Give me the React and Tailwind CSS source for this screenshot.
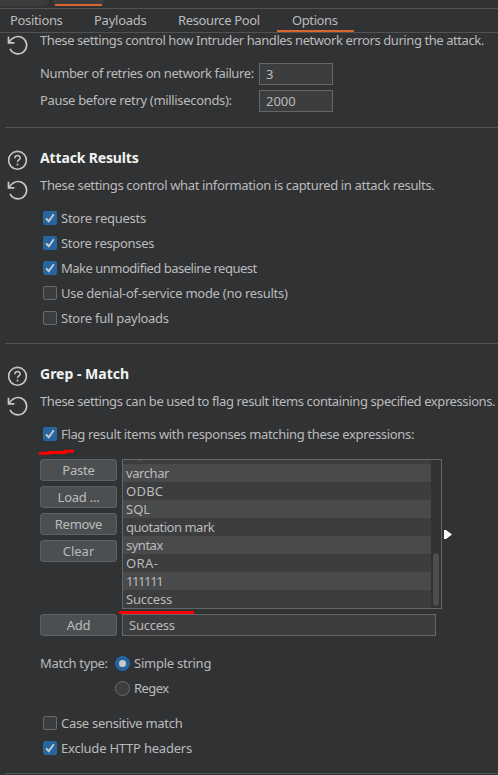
import React from "react";

const HelpIcon = () => (
  <svg className="block h-5 w-[22px] shrink-0" viewBox="0 0 22 20" fill="none" stroke="#c5c7c8">
    <circle cx="10.5" cy="10.3" r="8.9" strokeWidth="1.6" />
    <path d="M7.8 8.2C7.8 4.7 13.2 4.7 13.2 8C13.2 9.9 10.5 9.9 10.5 12" strokeWidth="1.5" />
    <path d="M10.5 13.6V15.4" strokeWidth="1.7" />
  </svg>
);

const ResetIcon = () => (
  <svg className="block h-5 w-[22px] shrink-0" viewBox="0 0 22 20" fill="none" stroke="#c5c7c8" strokeWidth="1.7">
    <path d="M1.5 1.8V7.8H7.4" />
    <path d="M1.8 7.4C4 4.4 7.2 1.5 11 1.5A8.7 8.7 0 1 1 3 13.8" />
  </svg>
);

const Checkbox = ({ on, children, track }) => (
  <div className="flex h-[25px] items-center">
    <span
      className={
        "mr-1 flex size-[14px] shrink-0 items-center justify-center rounded-[2px] " +
        (on ? "bg-[#2765a0]" : "border border-[#6b6b6b] bg-[#3c3d3e]")
      }
    >
      {on && (
        <svg className="block size-[14px]" viewBox="0 0 14 14" fill="none" stroke="#c9cbcd" strokeWidth="1.9">
          <path d="M3 7.3L5.8 10.2L10.8 3.2" />
        </svg>
      )}
    </span>
    <span className={"whitespace-nowrap leading-4 " + track}>{children}</span>
  </div>
);

const Radio = ({ on, children, track }) => (
  <div className="flex h-[25px] items-center">
    <span
      className={
        "mr-1 flex size-[15px] shrink-0 items-center justify-center rounded-full " +
        (on ? "bg-[#2765a0]" : "border border-[#6b6b6b] bg-[#3c3d3e]")
      }
    >
      {on && <span className="size-[7px] rounded-full bg-[#c9cbcd]" />}
    </span>
    <span className={"whitespace-nowrap pb-px leading-4 " + track}>{children}</span>
  </div>
);

const Button = ({ children, track = "" }) => (
  <button
    className={
      "block h-[22px] w-[77px] rounded-[3px] border border-[#5e6163] bg-[#4b4f51] text-center leading-5 " + track
    }
  >
    {children}
  </button>
);

const Field = ({ children, className }) => (
  <div className={"h-[22px] border border-[#646668] bg-[#3c3d3e] px-1.5 leading-5 " + className}>{children}</div>
);

const Rule = () => <div className="ml-[5px] h-px shrink-0 bg-[#515254]" />;

const words = [
  ["varchar", "tracking-[-0.43px]"],
  ["ODBC", "tracking-[0.25px]"],
  ["SQL", ""],
  ["quotation mark", "tracking-[-0.48px]"],
  ["syntax", "tracking-[-0.5px]"],
  ["ORA-", "tracking-[0.4px]"],
  ["111111", "tracking-[-1.4px]"],
  ["Success", "tracking-[-0.2px]"],
];

export default function App() {
  return (
    <div className="flex h-[775px] w-[498px] flex-col overflow-hidden bg-[#313234] font-['Noto_Sans',sans-serif] text-[13px] text-[#bbbbbb]">
      <div className="flex h-2 shrink-0">
        <div className="h-1.5 w-[49px] rounded-br-md bg-[#3c3c3c]" />
        <div className="ml-1 h-1.5 w-[51px] rounded-b-md bg-[#3c3c3c] px-0.5 pt-1">
          <div className="h-0.5 bg-[#d9652f]" />
        </div>
      </div>
      <div className="flex h-[25px] shrink-0 border-y border-[#515254] leading-[23px]">
        <div className="w-[83px] pl-[10px] tracking-[-0.33px]">Positions</div>
        <div className="w-[84px] pl-[11px] tracking-[-0.25px]">Payloads</div>
        <div className="w-[110px] whitespace-nowrap pl-[11px] tracking-[-0.38px]">Resource Pool</div>
        <div className="w-[77px] border-b-2 border-[#d9652f] pl-[15px] tracking-[-0.4px]">Options</div>
      </div>

      <div className="flex h-[94px] shrink-0 pl-[7px]">
        <div className="w-[33px] shrink-0 pt-[2px]">
          <ResetIcon />
        </div>
        <div>
          <p className="-mt-px whitespace-nowrap leading-4 tracking-[-0.42px]">
            These settings control how Intruder handles network errors during the attack.
          </p>
          <div className="mt-[15px] flex items-center">
            <span className="w-[219px] whitespace-nowrap tracking-[-0.39px]">Number of retries on network failure:</span>
            <Field className="w-[74px]">3</Field>
          </div>
          <div className="mt-[5px] flex items-center">
            <span className="w-[219px] whitespace-nowrap tracking-[-0.33px]">Pause before retry (milliseconds):</span>
            <Field className="w-[74px]">2000</Field>
          </div>
        </div>
      </div>
      <Rule />

      <div className="flex h-[215px] shrink-0 pl-[7px]">
        <div className="w-[33px] shrink-0 pt-[22px]">
          <HelpIcon />
          <div className="h-[10px]" />
          <ResetIcon />
        </div>
        <div className="pt-[22px]">
          <h2 className="text-sm font-bold leading-4 tracking-[-0.15px] text-[#f2f2f2]">Attack Results</h2>
          <p className="mt-[11px] whitespace-nowrap leading-4 tracking-[-0.34px]">
            These settings control what information is captured in attack results.
          </p>
          <div className="ml-[3px] mt-[12px]">
            <Checkbox on track="tracking-[-0.25px]">Store requests</Checkbox>
            <Checkbox on track="tracking-[-0.32px]">Store responses</Checkbox>
            <Checkbox on track="tracking-[-0.5px]">Make unmodified baseline request</Checkbox>
            <Checkbox track="tracking-[-0.27px]">Use denial-of-service mode (no results)</Checkbox>
            <Checkbox track="tracking-[-0.26px]">Store full payloads</Checkbox>
          </div>
        </div>
      </div>
      <Rule />

      <div className="flex h-[429px] shrink-0 pl-[7px]">
        <div className="w-[33px] shrink-0 pt-[22px]">
          <HelpIcon />
          <div className="h-[10px]" />
          <ResetIcon />
        </div>
        <div className="pt-[22px]">
          <h2 className="text-sm font-bold leading-4 text-[#f2f2f2]">Grep - Match</h2>
          <p className="mt-[11px] whitespace-nowrap leading-4 tracking-[-0.4px]">
            These settings can be used to flag result items containing specified expressions.
          </p>
          <div className="relative ml-[3px] mt-[12px]">
            <Checkbox on track="tracking-[-0.34px]">
              Flag result items with responses matching these expressions:
            </Checkbox>
            <svg className="absolute -left-1 top-[27px] h-2 w-9" viewBox="0 0 36 8" fill="none" stroke="#ff0000" strokeWidth="3">
              <path d="M0 5.3H10V4.6H26V3.3H35" />
            </svg>
          </div>
          <div className="mt-[13px] flex gap-[5px]">
            <div className="flex flex-col gap-[5px]">
              <Button track="tracking-[-0.2px]">Paste</Button>
              <Button track="tracking-[-0.25px]">Load ...</Button>
              <Button track="tracking-[-0.3px]">Remove</Button>
              <Button>Clear</Button>
            </div>
            <div className="relative flex h-[150px] w-[320px] border border-[#646668]">
              <div className="w-[308px]">
                <div className="flex h-1 items-start bg-[#3c3d3e] pl-[17px]">
                  <span className="h-px w-px bg-[#85878a]" />
                </div>
                {words.map(([word, track], i) => (
                  <div
                    key={word}
                    className={
                      "h-[18px] pl-[3px] leading-[18px] " + (i % 2 ? "bg-[#3c3d3e] " : "bg-[#494a4c] ") + track
                    }
                  >
                    {word}
                  </div>
                ))}
              </div>
              <div className="flex flex-1 flex-col justify-end bg-[#313234] pb-[2px] pl-[2px]">
                <div className="h-[53px] w-1.5 rounded-full bg-[#4d4e50]" />
              </div>
              <div className="absolute -left-1 top-[151px] h-[3px] w-[75px] bg-[#ff0000]" />
            </div>
            <svg className="-ml-[3px] mt-[71px] block h-[9px] w-2" viewBox="0 0 8 9" fill="#ffffff">
              <path d="M0 0H2L8 4.5L2 9H0Z" />
            </svg>
          </div>
          <div className="mt-[5px] flex gap-[5px]">
            <Button track="tracking-[-0.3px]">Add</Button>
            <Field className="w-[314px] tracking-[-0.25px]">Success</Field>
          </div>
          <div className="mt-[15px] flex">
            <span className="w-[75px] leading-[25px] tracking-[-0.35px]">Match type:</span>
            <div>
              <Radio on track="tracking-[-0.25px]">Simple string</Radio>
              <Radio track="tracking-[-0.55px]">Regex</Radio>
            </div>
          </div>
          <div className="ml-[3px] mt-[9px]">
            <Checkbox track="tracking-[-0.3px]">Case sensitive match</Checkbox>
            <Checkbox on track="tracking-[-0.22px]">Exclude HTTP headers</Checkbox>
          </div>
        </div>
      </div>
      <Rule />
    </div>
  );
}
